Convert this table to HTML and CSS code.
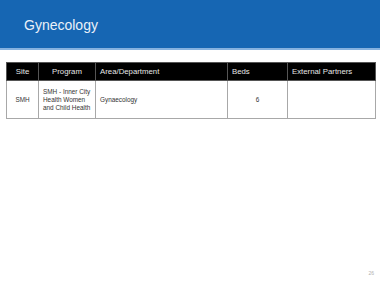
FILE: index.html
```html
<!DOCTYPE html>
<html>
<head>
<meta charset="utf-8">
<link rel="stylesheet" href="styles.css">
</head>
<body>
<div class="slide">
  <header class="banner">
    <h1 class="title">Gynecology</h1>
  </header>
  <table class="grid">
    <colgroup>
      <col class="c-site">
      <col class="c-prog">
      <col class="c-area">
      <col class="c-beds">
      <col class="c-ext">
    </colgroup>
    <thead>
      <tr>
        <th class="center">Site</th>
        <th class="center">Program</th>
        <th>Area/Department</th>
        <th>Beds</th>
        <th>External Partners</th>
      </tr>
    </thead>
    <tbody>
      <tr>
        <td class="center">SMH</td>
        <td class="prog">SMH - Inner City<br>Health Women<br>and Child Health</td>
        <td>Gynaecology</td>
        <td class="center">6</td>
        <td></td>
      </tr>
    </tbody>
  </table>
  <div class="pagenum">26</div>
</div>
</body>
</html>
```
FILE: styles.css
```css
html, body {
  margin: 0;
  padding: 0;
  background: #ffffff;
}
.slide {
  width: 380px;
  height: 285px;
  position: relative;
  font-family: "Liberation Sans", Arial, sans-serif;
}
.banner {
  height: 48px;
  background: #1666b3;
  border-bottom: 2px solid #86b2df;
  display: flex;
  align-items: center;
  padding-left: 24px;
  box-sizing: content-box;
}
.title {
  margin: 0;
  font-size: 14px;
  font-weight: normal;
  color: #eaf1f9;
  padding-top: 1px;
}
.grid {
  margin: 12px 0 0 6px;
  width: 369px;
  border-collapse: collapse;
  table-layout: fixed;
}
.c-site { width: 32px; }
.c-prog { width: 57px; }
.c-area { width: 132px; }
.c-beds { width: 60px; }
.c-ext { width: 88px; }
.grid th {
  background: #000000;
  color: #e6e6e6;
  font-weight: normal;
  font-size: 7.8px;
  height: 18px;
  padding: 0 4px;
  text-align: left;
  border: 1px solid #555;
  box-sizing: border-box;
}
.grid td {
  height: 38px;
  font-size: 6.4px;
  color: #333;
  padding: 0 4px;
  border: 1px solid #a8a8a8;
  vertical-align: middle;
  box-sizing: border-box;
}
.grid th.center, .grid td.center {
  text-align: center;
}
.grid td.prog {
  line-height: 8px;
}
.pagenum {
  position: absolute;
  right: 6px;
  bottom: 9px;
  font-size: 5px;
  color: #b0b0b0;
}
```
